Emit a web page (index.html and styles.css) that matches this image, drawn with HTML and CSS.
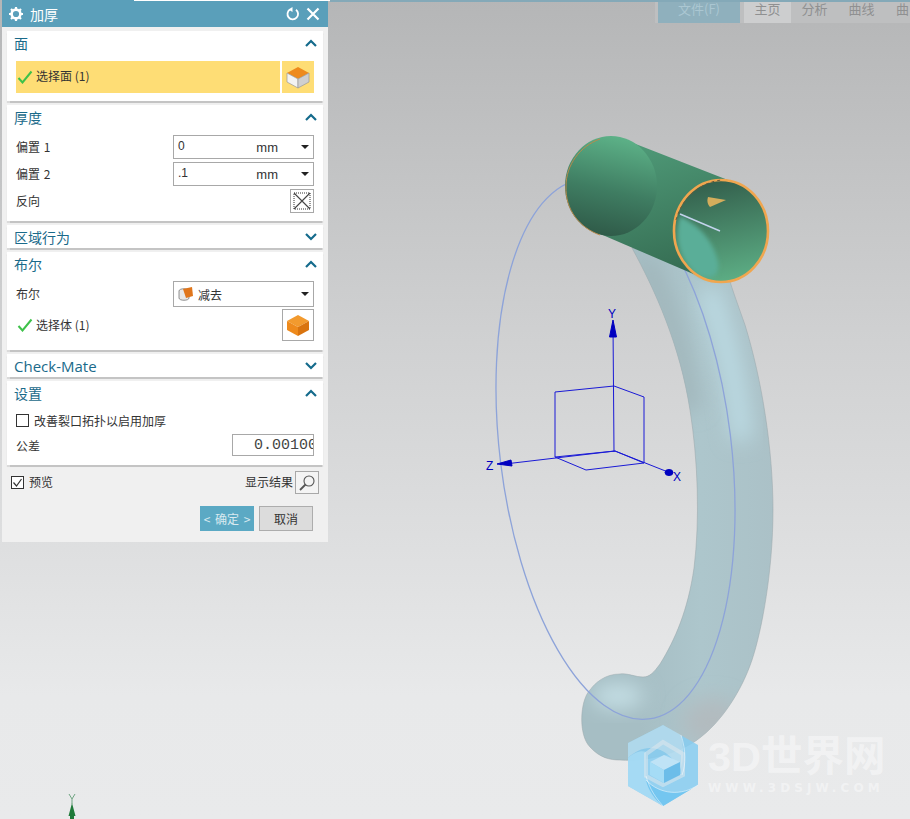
FILE: index.html
```html
<!DOCTYPE html>
<html>
<head>
    <meta charset="UTF-8">
    <title>加厚</title>
    <link rel="stylesheet" href="styles.css">
</head>
<body>
    <div class="viewport">
        <!-- model, triad and logo live on the free canvas -->
        <svg class="scene" width="910" height="819" viewBox="0 0 910 819">
            <defs>
                <linearGradient id="tube" gradientUnits="userSpaceOnUse" x1="640" y1="400" x2="775" y2="400">
                    <stop offset="0" stop-color="#a6bec4"/>
                    <stop offset="0.45" stop-color="#adc6cc"/>
                    <stop offset="1" stop-color="#abc1c7"/>
                </linearGradient>
                <linearGradient id="body" x1="0.3" y1="0" x2="0.6" y2="1">
                    <stop offset="0" stop-color="#4f9a78"/>
                    <stop offset="1" stop-color="#356c52"/>
                </linearGradient>
                <linearGradient id="capEnd" x1="0.6" y1="0" x2="0.4" y2="1">
                    <stop offset="0" stop-color="#5db288"/>
                    <stop offset="0.55" stop-color="#3f7d62"/>
                    <stop offset="1" stop-color="#2f5a48"/>
                </linearGradient>
                <linearGradient id="inner" x1="0.4" y1="0" x2="0.6" y2="1">
                    <stop offset="0" stop-color="#335f4c"/>
                    <stop offset="1" stop-color="#5dae85"/>
                </linearGradient>
                <filter id="soft" x="-60%" y="-60%" width="220%" height="220%">
                    <feGaussianBlur stdDeviation="10"/>
                </filter>
                <filter id="softer" x="-30%" y="-30%" width="160%" height="160%">
                    <feGaussianBlur stdDeviation="2"/>
                </filter>
                <clipPath id="tubeClip">
                    <path d="M632 248 C655 290 680 345 690 410 C698 460 700 520 694 568 C688 610 675 640 660 664 C654 672 650 677 643 677 C635 677 628 673 620 674 C605 674 595 683 590 690 C580 700 578 735 590 747 C600 758 610 760 620 760 C650 762 680 752 697 740 C722 722 742 690 752 660 C762 630 773 570 773 510 C773 450 762 380 745 325 C738 305 733 292 728 275 Z"/>
                </clipPath>
            </defs>

            <path class="torus" fill="url(#tube)" d="M632 248 C655 290 680 345 690 410 C698 460 700 520 694 568 C688 610 675 640 660 664 C654 672 650 677 643 677 C635 677 628 673 620 674 C605 674 595 683 590 690 C580 700 578 735 590 747 C600 758 610 760 620 760 C650 762 680 752 697 740 C722 722 742 690 752 660 C762 630 773 570 773 510 C773 450 762 380 745 325 C738 305 733 292 728 275 Z"/>
            <g clip-path="url(#tubeClip)">
                <path class="tube-shine" filter="url(#soft)" d="M708 290 C722 330 735 370 742 440"/>
                <path class="tube-shade" filter="url(#soft)" d="M645 262 C665 300 682 350 692 410"/>
                <ellipse class="tube-tip" filter="url(#soft)" cx="618" cy="696" rx="26" ry="12"/>
                <ellipse class="tube-grey" filter="url(#soft)" cx="712" cy="722" rx="30" ry="24"/>
            </g>
            <ellipse class="wire" cx="615.5" cy="449" rx="115.7" ry="272" transform="rotate(-7 615.5 449)"/>

            <path class="cyl-body" fill="url(#body)" d="M628 141 L733 182 L698 276 L598 233 Z"/>
            <ellipse class="cyl-back" fill="url(#capEnd)" cx="611" cy="186" rx="46" ry="50"/>
            <path class="cyl-edge" d="M600 235 C580 228 565 210 566 186 C566 165 580 146 600 139"/>
            <ellipse fill="url(#inner)" cx="721" cy="231" rx="47" ry="51"/>
            <path class="cyl-patch" filter="url(#softer)" d="M680 216 C674 235 678 262 700 276 C712 280 720 276 718 262 C714 245 704 228 680 216 Z"/>
            <ellipse class="cyl-rim" cx="721" cy="231" rx="47" ry="51"/>
            <path class="cyl-rim-dark" d="M676 220 C682 198 700 182 722 180"/>
            <line class="cyl-ray" x1="680" y1="214" x2="720" y2="231"/>
            <path class="cone" d="M708 197 L726 200 L710 207 C707 204 707 200 708 197 Z"/>

            <g class="triad">
                <line x1="614" y1="452" x2="613" y2="325"/>
                <line x1="615" y1="451" x2="505" y2="464"/>
                <line x1="615" y1="451" x2="668" y2="472"/>
                <path d="M555 457 L555 392 L614 386 L644 397 L644 463 L586 470 Z"/>
                <line x1="555" y1="457" x2="615" y2="451"/>
                <line x1="615" y1="451" x2="644" y2="463"/>
                <path class="tip" d="M613 320 L616.5 337 L609.5 337 Z"/>
                <path class="tip" d="M497 464 L511 460 L512 466 Z"/>
                <ellipse class="tip" cx="669" cy="472.5" rx="4" ry="3"/>
                <text x="608" y="318">Y</text>
                <text x="486" y="470">Z</text>
                <text x="673" y="481">X</text>
            </g>

            <g class="mini-triad">
                <path class="mini-tip" d="M72 803 L75.5 816 L74 816 L74 819 L70 819 L70 816 L68.5 816 Z"/>
                <path class="mini-y" d="M69 794 L72 799 L75 794 M72 799 L72 804"/>
            </g>

            <g class="logo">
                <path class="hex-a" d="M663 725 L698 745 L698 785 L663 806 L628 786 L628 743 Z"/>
                <path class="hex-b" d="M663 725 L681 735 C684 748 684 760 680 770 C672 755 662 748 650 748 C642 748 634 752 628 758 L628 743 Z"/>
                <path class="hex-l" d="M628 758 C634 752 642 750 646 752 L646 776 C648 788 655 798 663 806 L628 786 Z"/>
                <path class="hex-c" d="M646 780 C660 795 682 796 698 785 L663 806 C655 800 648 790 646 780 Z"/>
                <path class="hex-ring" d="M663 742 L683 754 L683 775 L663 785 L646 776 L646 754 Z"/>
                <path class="cube-top" d="M664 755 L680 762 L664 770 L650 762 Z"/>
                <path class="cube-left" d="M650 762 L664 770 L664 783 L650 775 Z"/>
                <path class="cube-right" d="M680 762 L664 770 L664 783 L680 775 Z"/>
                <path class="swirl" d="M646 776 C650 790 656 798 663 806 M646 780 C660 795 682 796 698 785 M681 735 C686 750 686 765 682 775"/>
            </g>
        </svg>

        <div class="ribbon">
            <span class="tab tab-file">文件(F)</span>
            <span class="tab tab-on">主页</span>
            <span class="tab">分析</span>
            <span class="tab">曲线</span>
            <span class="tab">曲</span>
        </div>

        <div class="wm-text">
            <div class="wm-name">3D世界网</div>
            <div class="wm-url">WWW.3DSJW.COM</div>
        </div>

        <div class="dialog">
            <div class="title-bar">
                <svg class="ic-gear" width="16" height="16" viewBox="0 0 16 16">
                    <circle cx="8" cy="8" r="4.4" fill="none" stroke="#fff" stroke-width="2.6"/>
                    <path d="M8 1v3M8 12v3M1 8h3M12 8h3M3 3l2 2M11 11l2 2M13 3l-2 2M5 11l-2 2" stroke="#fff" stroke-width="2.2"/>
                </svg>
                <span class="title">加厚</span>
                <svg class="ic-reset" width="14" height="14" viewBox="0 0 14 14">
                    <path d="M4 2.5 A5.3 5.3 0 1 0 10 2.8" fill="none" stroke="#fff" stroke-width="1.8"/>
                    <path d="M6.5 0 L2.5 2.6 L6.5 5 Z" fill="#fff"/>
                </svg>
                <svg class="ic-close" width="14" height="14" viewBox="0 0 14 14">
                    <path d="M1.5 1.5 L12.5 12.5 M12.5 1.5 L1.5 12.5" stroke="#fff" stroke-width="2.2"/>
                </svg>
            </div>

            <div class="section sec-face">
                <div class="sec-head"><span>面</span><svg class="chev" width="12" height="8" viewBox="0 0 12 8"><path d="M1 7 L6 2 L11 7"/></svg></div>
                <div class="pick-row">
                    <div class="pick-label">
                        <svg class="check" width="16" height="14" viewBox="0 0 16 14"><path d="M1.5 8 L5.5 12.5 L14.5 1.5"/></svg>
                        <span>选择面 (1)</span>
                    </div>
                    <div class="pick-btn">
                        <svg width="24" height="24" viewBox="0 0 24 24">
                            <path d="M12 2 L23 8 L12 14 L1 8 Z" fill="#ee8a1c"/>
                            <path d="M1 8 L12 14 L12 23 L1 17 Z" fill="#f3f3f3" stroke="#9a9a9a" stroke-width="0.7"/>
                            <path d="M23 8 L12 14 L12 23 L23 17 Z" fill="#cfcfcf" stroke="#9a9a9a" stroke-width="0.7"/>
                        </svg>
                    </div>
                </div>
            </div>

            <div class="section sec-thick">
                <div class="sec-head"><span>厚度</span><svg class="chev" width="12" height="8" viewBox="0 0 12 8"><path d="M1 7 L6 2 L11 7"/></svg></div>
                <div class="row">
                    <span class="lbl">偏置 1</span>
                    <div class="field"><span class="val">0</span><span class="unit">mm</span><i class="caret"></i></div>
                </div>
                <div class="row">
                    <span class="lbl">偏置 2</span>
                    <div class="field"><span class="val">.1</span><span class="unit">mm</span><i class="caret"></i></div>
                </div>
                <div class="row">
                    <span class="lbl">反向</span>
                    <div class="btn-square">
                        <svg width="20" height="20" viewBox="0 0 20 20">
                            <rect x="2" y="2" width="16" height="16" fill="none" stroke="#333" stroke-width="1" stroke-dasharray="1 1"/>
                            <path d="M2 2 L18 18 M18 2 L2 18" stroke="#444" stroke-width="1.1"/>
                        </svg>
                    </div>
                </div>
            </div>

            <div class="section sec-closed">
                <div class="sec-head"><span>区域行为</span><svg class="chev" width="12" height="8" viewBox="0 0 12 8"><path d="M1 1 L6 6 L11 1"/></svg></div>
            </div>

            <div class="section sec-bool">
                <div class="sec-head"><span>布尔</span><svg class="chev" width="12" height="8" viewBox="0 0 12 8"><path d="M1 7 L6 2 L11 7"/></svg></div>
                <div class="row">
                    <span class="lbl">布尔</span>
                    <div class="field field-bool">
                        <svg width="16" height="16" viewBox="0 0 16 16">
                            <path d="M1 5 C1 2 11 2 11 5 L11 12 C11 15 1 15 1 12 Z" fill="#e8e8e8" stroke="#777" stroke-width="0.8"/>
                            <path d="M5 3 L14 1 L15 10 L8 12 Z" fill="#e0761c"/>
                        </svg>
                        <span class="val-bool">减去</span><i class="caret"></i>
                    </div>
                </div>
                <div class="row row-pick">
                    <div class="pick-plain">
                        <svg class="check" width="16" height="14" viewBox="0 0 16 14"><path d="M1.5 8 L5.5 12.5 L14.5 1.5"/></svg>
                        <span>选择体 (1)</span>
                    </div>
                    <div class="btn-body">
                        <svg width="24" height="24" viewBox="0 0 24 24">
                            <path d="M12 2 L23 8 L12 14 L1 8 Z" fill="#f29a2e"/>
                            <path d="M1 8 L12 14 L12 23 L1 17 Z" fill="#ee8a1c"/>
                            <path d="M23 8 L12 14 L12 23 L23 17 Z" fill="#d9740f"/>
                        </svg>
                    </div>
                </div>
            </div>

            <div class="section sec-closed">
                <div class="sec-head"><span class="latin">Check-Mate</span><svg class="chev" width="12" height="8" viewBox="0 0 12 8"><path d="M1 1 L6 6 L11 1"/></svg></div>
            </div>

            <div class="section sec-set">
                <div class="sec-head"><span>设置</span><svg class="chev" width="12" height="8" viewBox="0 0 12 8"><path d="M1 7 L6 2 L11 7"/></svg></div>
                <label class="check-row"><i class="box"></i><span>改善裂口拓扑以启用加厚</span></label>
                <div class="row row-tol">
                    <span>公差</span>
                    <div class="field field-tol">0.00100</div>
                </div>
            </div>

            <div class="foot">
                <label class="check-row foot-check">
                    <i class="box">
                        <svg width="13" height="13" viewBox="0 0 13 13"><path d="M2.5 6.5 L5.5 10 L10.5 3" fill="none" stroke="#333" stroke-width="1.2"/></svg>
                    </i>
                    <span>预览</span>
                </label>
                <div class="show">
                    <span>显示结果</span>
                    <div class="btn-lens">
                        <svg width="20" height="20" viewBox="0 0 20 20">
                            <circle cx="12" cy="8" r="5" fill="none" stroke="#555" stroke-width="1.1"/>
                            <path d="M8.5 11.5 L3 17" stroke="#555" stroke-width="1.8"/>
                        </svg>
                    </div>
                </div>
            </div>

            <div class="actions">
                <div class="btn btn-ok">&lt; 确定 &gt;</div>
                <div class="btn btn-cancel">取消</div>
            </div>
        </div>

        <div class="top-white"></div>
        <div class="top-teal"></div>
    </div>
</body>
</html>
```

FILE: styles.css
```css
* {
    box-sizing: border-box;
}

body {
    margin: 0;
    font-family: "Noto Sans CJK SC", "Liberation Sans", sans-serif;
    color: #333;
}

.viewport {
    position: relative;
    width: 910px;
    height: 819px;
    overflow: hidden;
    background: linear-gradient(180deg, #b5b6b7 0%, #cfd0d1 40%, #e8e9ea 85%, #e9eaeb 100%);
}

.scene {
    position: absolute;
    left: 0;
    top: 0;
}

.top-white {
    position: absolute;
    left: 134px;
    top: 0;
    width: 196px;
    height: 1px;
    background: #fff;
}

.top-teal {
    position: absolute;
    left: 330px;
    right: 0;
    top: 0;
    height: 2px;
    background: #84a9b8;
}

/* model */
.torus {
    stroke: #97a5a8;
    stroke-width: 0.5;
}

.tube-shine {
    fill: none;
    stroke: #bcdbe4;
    stroke-width: 20;
}

.tube-shade {
    fill: none;
    stroke: #a0b5ba;
    stroke-width: 18;
}

.tube-tip {
    fill: #c6e0e6;
}

.tube-grey {
    fill: #b2bbbf;
}

.wire {
    fill: none;
    stroke: #8da3d9;
    stroke-width: 1.3;
}

.cyl-edge {
    fill: none;
    stroke: #b98a4c;
    stroke-width: 1;
}

.cyl-patch {
    fill: #5aae98;
}

.cyl-rim {
    fill: none;
    stroke: #f0a64f;
    stroke-width: 2.6;
}

.cyl-rim-dark {
    fill: none;
    stroke: #6a5a3a;
    stroke-width: 1;
    stroke-dasharray: 3 3;
}

.cyl-ray {
    stroke: #c3d3ec;
    stroke-width: 1.5;
}

.cone {
    fill: #d4ad5c;
}

.triad line,
.triad path {
    fill: none;
    stroke: #1a1ad6;
    stroke-width: 1;
}

.triad .tip {
    fill: #0000c0;
    stroke: #0000c0;
}

.triad text {
    font: 12px "Liberation Sans", sans-serif;
    fill: #0000c0;
}

.mini-tip {
    fill: #1f7a3a;
}

.mini-y {
    fill: none;
    stroke: #6fa582;
    stroke-width: 1;
}

/* logo */
.hex-a {
    fill: #86cdf1;
    opacity: 0.85;
}

.hex-b {
    fill: #dbe9ee;
    opacity: 0.45;
}

.hex-l {
    fill: #a9dcf5;
    opacity: 0.8;
}

.hex-c {
    fill: #74c6f0;
}

.hex-ring {
    fill: none;
    stroke: #dfe8ec;
    stroke-width: 4;
    opacity: 0.55;
}

.cube-top {
    fill: #bfe3f6;
}

.cube-left {
    fill: #a5dcf6;
}

.cube-right {
    fill: #6cbde9;
}

.swirl {
    fill: none;
    stroke: #fff;
    stroke-width: 0.7;
    opacity: 0.7;
}

.wm-text {
    position: absolute;
    left: 708px;
    top: 733px;
    color: rgba(255, 255, 255, 0.42);
}

.wm-name {
    font-family: "Liberation Sans", "Noto Sans CJK SC", sans-serif;
    font-size: 41.5px;
    font-weight: bold;
    line-height: 48px;
    white-space: nowrap;
}

.wm-url {
    font-family: "DejaVu Sans", sans-serif;
    font-size: 12px;
    font-weight: bold;
    letter-spacing: 4.1px;
    line-height: 14px;
    white-space: nowrap;
}

/* ribbon behind */
.ribbon {
    position: absolute;
    left: 655px;
    top: 2px;
    right: 0;
    height: 21px;
    display: flex;
    background: #bebfc0;
    font-size: 13px;
    line-height: 14px;
    color: #8f9091;
    white-space: nowrap;
}

.tab {
    flex: 0 0 47px;
    text-align: center;
}

.tab:last-child {
    text-align: left;
    padding-left: 11px;
}

.tab-file {
    flex: 0 0 82px;
    margin: 0 4px 0 3px;
    background: #8fb0bd;
    color: #abc7d2;
}

.tab-on {
    background: #cdcecf;
}

/* dialog */
.dialog {
    position: absolute;
    left: 2px;
    top: 0;
    width: 326px;
    height: 542px;
    background: #f0f0f0;
    display: flex;
    flex-direction: column;
    font-size: 12px;
}

.title-bar {
    height: 27px;
    background: #5a9fba;
    display: flex;
    align-items: center;
    padding: 0 8px 0 6px;
    color: #fff;
    flex-shrink: 0;
}

.title {
    margin-left: 6px;
    font-size: 14px;
    flex: 1;
}

.ic-close {
    margin-left: 6px;
}

.section {
    margin: 4px 5px 0;
    background: #fff;
    box-shadow: 0 1.5px 1px #c4c4c4;
    padding: 0 9px;
    flex-shrink: 0;
}

.sec-head {
    height: 24px;
    margin-left: -2px;
    display: flex;
    align-items: center;
    justify-content: space-between;
    font-size: 14px;
    color: #1a6a8a;
}

.sec-head .latin {
    font-family: "Open Sans", "Liberation Sans", sans-serif;
    font-size: 15px;
}

.chev {
    margin-right: -3px;
}

.chev path {
    fill: none;
    stroke: #156b8c;
    stroke-width: 2.2;
}

.sec-face {
    height: 70px;
}

.sec-thick {
    height: 116px;
}

.sec-closed {
    height: 23px;
}

.sec-bool {
    height: 98px;
}

.sec-set {
    height: 84px;
}

.sec-face .sec-head,
.sec-thick .sec-head,
.sec-bool .sec-head {
    margin-bottom: 6px;
}

.pick-row {
    display: flex;
    gap: 2px;
    height: 32px;
}

.pick-label {
    flex: 1;
    background: #fedd75;
    display: flex;
    align-items: center;
    gap: 3px;
    padding-left: 1px;
}

.pick-label span {
    margin-top: -3px;
}

.pick-btn {
    width: 32px;
    background: #fedd75;
    display: flex;
    align-items: center;
    justify-content: center;
}

.check path {
    fill: none;
    stroke: #3ec14a;
    stroke-width: 2;
}

.row {
    display: flex;
    align-items: center;
    justify-content: space-between;
    height: 24px;
    margin-bottom: 3px;
}

.lbl {
    word-spacing: 1px;
    margin-top: -2px;
}

.field {
    width: 141px;
    height: 24px;
    border: 1px solid #a8a8a8;
    background: #fff;
    display: flex;
    align-items: center;
    padding: 0 4px;
    font-family: "Liberation Sans", sans-serif;
    font-size: 12px;
}

.val {
    flex: 1;
    margin-top: -2px;
}

.unit {
    margin-right: 23px;
    font-size: 13px;
}

.caret {
    width: 0;
    height: 0;
    border-left: 4px solid transparent;
    border-right: 4px solid transparent;
    border-top: 4px solid #222;
}

.btn-square {
    width: 24px;
    height: 24px;
    border: 1px solid #a8a8a8;
    display: flex;
    align-items: center;
    justify-content: center;
}

.field-bool {
    height: 26px;
    gap: 4px;
    font-family: "Noto Sans CJK SC", sans-serif;
}

.val-bool {
    flex: 1;
}

.row-pick {
    height: 32px;
    margin: 3px 0 0;
}

.pick-plain {
    display: flex;
    align-items: center;
    gap: 3px;
    padding-left: 1px;
}

.pick-plain span {
    margin-top: -2px;
}

.btn-body {
    width: 32px;
    height: 32px;
    border: 1px solid #a8a8a8;
    display: flex;
    align-items: center;
    justify-content: center;
}

.check-row {
    display: flex;
    align-items: center;
    gap: 5px;
    margin-top: 4px;
    height: 22px;
}

.box {
    width: 13px;
    height: 13px;
    border: 1px solid #333;
    background: #fff;
    flex-shrink: 0;
    display: flex;
}

.box svg {
    margin: -1px;
    flex-shrink: 0;
}

.row-tol {
    height: 22px;
    margin-top: 3px;
}

.field-tol {
    width: 82px;
    height: 22px;
    padding: 0 0 0 21px;
    font-family: "Liberation Mono", monospace;
    font-size: 15px;
    color: #444;
    overflow: hidden;
    white-space: nowrap;
}

.foot {
    display: flex;
    justify-content: space-between;
    align-items: center;
    padding: 0 9px;
    margin-top: 6px;
    height: 23px;
}

.foot-check {
    margin-top: 0;
}

.foot-check span,
.show span {
    margin-top: -2px;
}

.show {
    display: flex;
    align-items: center;
    gap: 2px;
}

.btn-lens {
    width: 24px;
    height: 23px;
    border: 1px solid #a8a8a8;
    background: #f4f4f4;
    display: flex;
    align-items: center;
    justify-content: center;
}

.actions {
    display: flex;
    justify-content: flex-end;
    gap: 5px;
    padding-right: 15px;
    margin-top: 12px;
}

.btn {
    width: 54px;
    height: 25px;
    display: flex;
    align-items: center;
    justify-content: center;
}

.btn-ok {
    background: #5ba9c4;
    color: #d9eaf0;
    word-spacing: 2px;
}

.btn-cancel {
    background: #dcdcdc;
    border: 1px solid #adadad;
}
```
